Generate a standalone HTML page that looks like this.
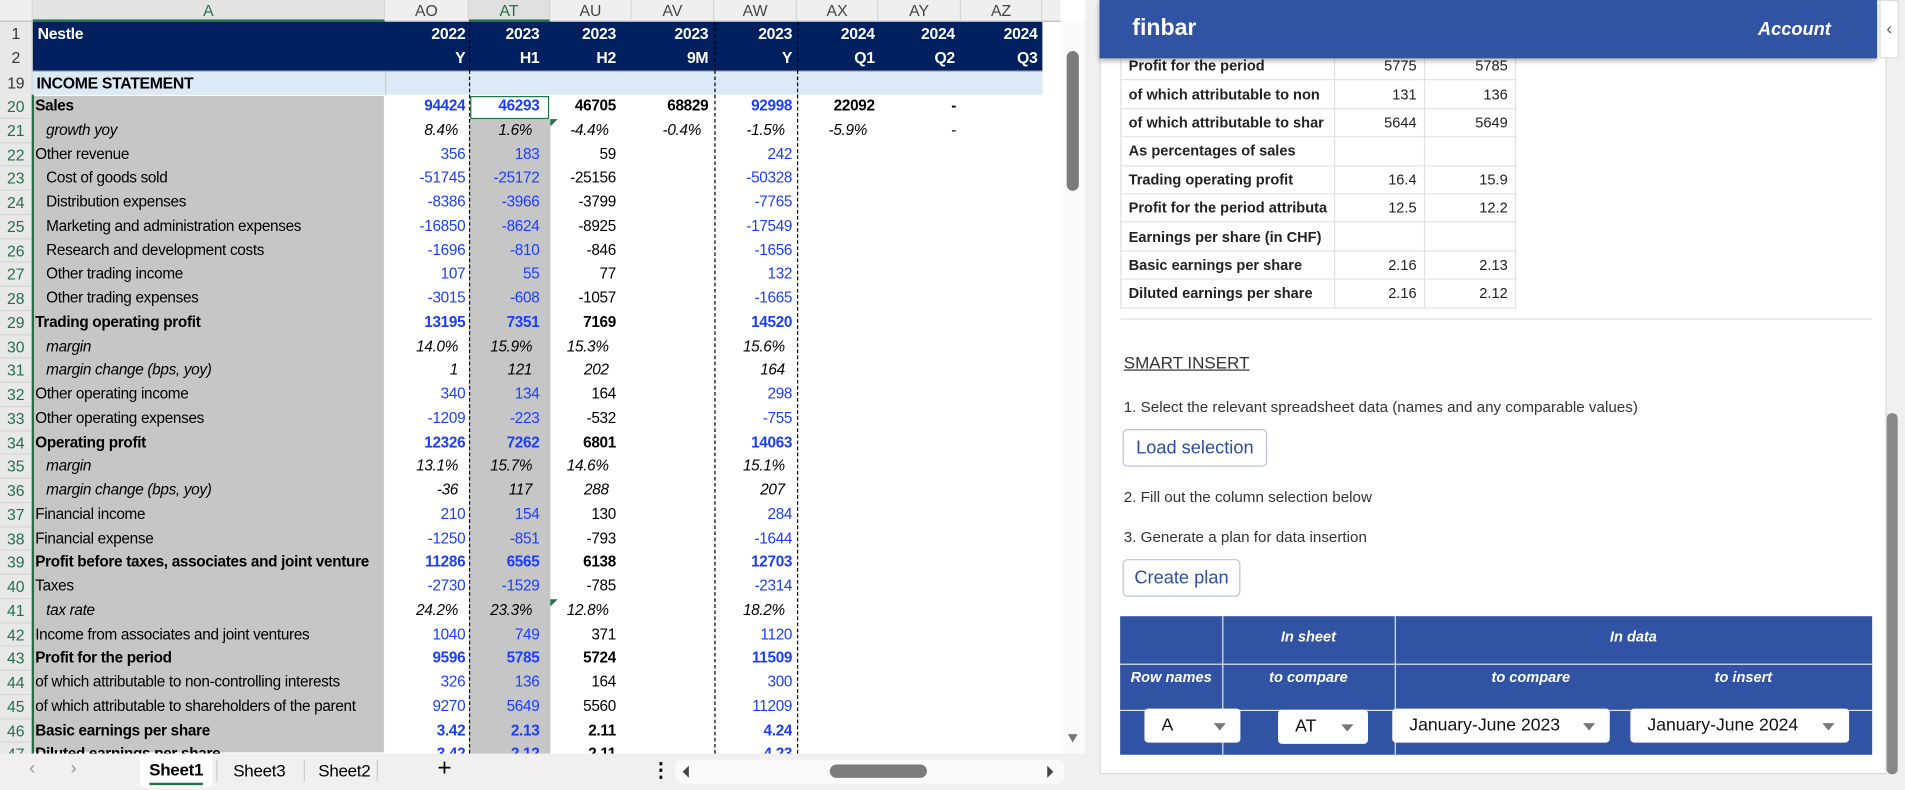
<!DOCTYPE html>
<html><head><meta charset="utf-8">
<style>
*{box-sizing:border-box;margin:0;padding:0}
html,body{width:1905px;height:790px;overflow:hidden;background:#f0f0f0}
#w{position:absolute;left:0;top:0;width:1568px;height:650px;transform:scale(1.2149,1.2154);transform-origin:0 0;background:#f0f0f0;overflow:hidden}
.xl{position:absolute;left:0;top:0;width:893px;height:650px;background:#fff;font-family:"Liberation Sans Narrow","Liberation Sans",sans-serif;font-size:12.6px;letter-spacing:-0.25px;color:#000}
.ab{position:absolute}
.ch{position:absolute;top:0;height:18px;background:#efefef;border-right:1px solid #d4d4d4;border-bottom:1px solid #bdbdbd;text-align:center;line-height:18px;color:#444;font-size:13px;letter-spacing:0}
.navy{position:absolute;left:27px;top:18px;width:831px;height:40px;background:#002060}
.hr{position:absolute;color:#fff;font-weight:bold;font-size:13px;height:20px;line-height:20px;text-align:right}
.rows{position:absolute;left:0;top:78px;width:873px}
.r{position:relative;height:19.75px;line-height:19.75px}
.r span{position:absolute;top:0;white-space:nowrap;overflow:hidden}
.n{left:0;width:26px;text-align:center;color:#217346;font-size:13px;letter-spacing:0;background:#e8e8e8;border-bottom:1px solid #d4d4d4;height:19.75px}
.a{left:29px;width:288px}
.i{font-style:italic}
.b{font-weight:bold}
.in{padding-left:9px}
.c{text-align:right}
.ao{left:317px;width:66px}.at{left:386px;width:58px}.au{left:453px;width:54px}.av{left:520px;width:63px}.aw{left:588px;width:64px}.ax{left:656px;width:64px}
.p{padding-right:6px}
.bl{color:#1a3dff}
.dot{position:absolute;top:18px;width:0;border-left:1px dashed #000;height:602px}
.pan{font-family:"Liberation Sans",sans-serif}
.tb td{border:1px solid #e2e2e2;height:23.4px;font-size:12px;font-weight:bold;color:#222;padding:0 6px;white-space:nowrap;overflow:hidden}
.tb td.v{text-align:right;font-weight:normal;color:#222}
.bt{position:absolute;border:1px solid #b7c3dd;border-radius:4px;color:#2d4fa0;font-size:15px;text-align:center;line-height:29px;background:#fff}
.bt2{position:absolute;color:#fff;font-style:italic;font-weight:bold;font-size:12px;text-align:center}
.sel{position:absolute;background:#fff;border-radius:3px;font-size:14.5px;color:#111;line-height:28px;padding-left:14px;height:28px}
.sel:after{content:"";position:absolute;right:12px;top:12px;border-left:5px solid transparent;border-right:5px solid transparent;border-top:6px solid #777}
</style></head><body><div id="w">
<div class="xl">
 <div class="ab" style="left:0;top:0;width:27px;height:18px;background:#efefef;border-right:1px solid #d4d4d4;border-bottom:1px solid #bdbdbd"></div>
 <div class="ch" style="left:27px;width:290px;color:#217346;border-bottom:2px solid #217346;background:#e3e3e3">A</div>
 <div class="ch" style="left:317px;width:69px">AO</div>
 <div class="ch" style="left:386px;width:67px;color:#217346;border-bottom:2px solid #217346;background:#e0e0e0">AT</div>
 <div class="ch" style="left:453px;width:67px">AU</div>
 <div class="ch" style="left:520px;width:68px">AV</div>
 <div class="ch" style="left:588px;width:68px">AW</div>
 <div class="ch" style="left:656px;width:67px">AX</div>
 <div class="ch" style="left:723px;width:68px">AY</div>
 <div class="ch" style="left:791px;width:67px">AZ</div>
 <div class="ch" style="left:858px;width:15px;border-right:none"></div>
 <div class="ab" style="left:0;top:18px;width:27px;height:60px;background:#e8e8e8;border-right:1px solid #d4d4d4"></div>
 <div class="ab" style="left:0;top:18px;width:26px;text-align:center;line-height:20px;color:#333;font-size:13px">1<br>2</div>
 <div class="ab" style="left:0;top:58.5px;width:26px;text-align:center;line-height:20px;color:#333;font-size:13px">19</div>
 <div class="navy"></div>
 <div class="hr" style="left:31px;top:18px;text-align:left">Nestle</div>
 <div class="hr" style="left:317px;top:18px;width:66px">2022<br>Y</div>
 <div class="hr" style="left:386px;top:18px;width:58px">2023<br>H1</div>
 <div class="hr" style="left:453px;top:18px;width:54px">2023<br>H2</div>
 <div class="hr" style="left:520px;top:18px;width:63px">2023<br>9M</div>
 <div class="hr" style="left:588px;top:18px;width:64px">2023<br>Y</div>
 <div class="hr" style="left:656px;top:18px;width:64px">2024<br>Q1</div>
 <div class="hr" style="left:723px;top:18px;width:63px">2024<br>Q2</div>
 <div class="hr" style="left:791px;top:18px;width:63px">2024<br>Q3</div>
 <div class="ab" style="left:27px;top:58px;width:831px;height:1px;background:#9a9a9a"></div>
 <div class="ab" style="left:27px;top:59px;width:831px;height:19px;background:#dce9f7"></div>
 <div class="ab" style="left:317px;top:59px;width:1px;height:19px;background:#c8c8c8"></div>
 <div class="ab b" style="left:30px;top:59px;line-height:19px;font-size:13px">INCOME STATEMENT</div>
 <div class="ab" style="left:27px;top:78px;width:290px;height:542px;background:#c6c6c6;border:1px solid #fff"></div>
 <div class="ab" style="left:386px;top:98px;width:67px;height:522px;background:#c6c6c6"></div>
 <div class="ab" style="left:387px;top:79px;width:65px;height:19px;border:1.5px solid #217346;background:#fff"></div>
 <div class="ab" style="left:26px;top:78px;width:2px;height:542px;background:#217346"></div>
 <div class="ab" style="left:453px;top:98px;border-top:6px solid #217346;border-right:6px solid transparent"></div>
 <div class="ab" style="left:453px;top:493px;border-top:6px solid #217346;border-right:6px solid transparent"></div>
 <div class="dot" style="left:386px"></div>
 <div class="dot" style="left:588px"></div>
 <div class="dot" style="left:656px"></div>
 <div class="rows">
  <div class="r"><span class="n">20</span><span class="a b">Sales</span><span class="c ao b bl">94424</span><span class="c at b bl">46293</span><span class="c au b">46705</span><span class="c av b">68829</span><span class="c aw b bl">92998</span><span class="c ax b">22092</span><span class="b" style="left:783px">-</span></div>
  <div class="r"><span class="n">21</span><span class="a i in">growth yoy</span><span class="c ao i p">8.4%</span><span class="c at i p">1.6%</span><span class="c au i p">-4.4%</span><span class="c av i p">-0.4%</span><span class="c aw i p">-1.5%</span><span class="i" style="left:682px">-5.9%</span><span style="left:783px">-</span></div>
  <div class="r"><span class="n">22</span><span class="a">Other revenue</span><span class="c ao bl">356</span><span class="c at bl">183</span><span class="c au">59</span><span class="c aw bl">242</span></div>
  <div class="r"><span class="n">23</span><span class="a in">Cost of goods sold</span><span class="c ao bl">-51745</span><span class="c at bl">-25172</span><span class="c au">-25156</span><span class="c aw bl">-50328</span></div>
  <div class="r"><span class="n">24</span><span class="a in">Distribution expenses</span><span class="c ao bl">-8386</span><span class="c at bl">-3966</span><span class="c au">-3799</span><span class="c aw bl">-7765</span></div>
  <div class="r"><span class="n">25</span><span class="a in">Marketing and administration expenses</span><span class="c ao bl">-16850</span><span class="c at bl">-8624</span><span class="c au">-8925</span><span class="c aw bl">-17549</span></div>
  <div class="r"><span class="n">26</span><span class="a in">Research and development costs</span><span class="c ao bl">-1696</span><span class="c at bl">-810</span><span class="c au">-846</span><span class="c aw bl">-1656</span></div>
  <div class="r"><span class="n">27</span><span class="a in">Other trading income</span><span class="c ao bl">107</span><span class="c at bl">55</span><span class="c au">77</span><span class="c aw bl">132</span></div>
  <div class="r"><span class="n">28</span><span class="a in">Other trading expenses</span><span class="c ao bl">-3015</span><span class="c at bl">-608</span><span class="c au">-1057</span><span class="c aw bl">-1665</span></div>
  <div class="r"><span class="n">29</span><span class="a b">Trading operating profit</span><span class="c ao b bl">13195</span><span class="c at b bl">7351</span><span class="c au b">7169</span><span class="c aw b bl">14520</span></div>
  <div class="r"><span class="n">30</span><span class="a i in">margin</span><span class="c ao i p">14.0%</span><span class="c at i p">15.9%</span><span class="c au i p">15.3%</span><span class="c aw i p">15.6%</span></div>
  <div class="r"><span class="n">31</span><span class="a i in">margin change (bps, yoy)</span><span class="c ao i p">1</span><span class="c at i p">121</span><span class="c au i p">202</span><span class="c aw i p">164</span></div>
  <div class="r"><span class="n">32</span><span class="a">Other operating income</span><span class="c ao bl">340</span><span class="c at bl">134</span><span class="c au">164</span><span class="c aw bl">298</span></div>
  <div class="r"><span class="n">33</span><span class="a">Other operating expenses</span><span class="c ao bl">-1209</span><span class="c at bl">-223</span><span class="c au">-532</span><span class="c aw bl">-755</span></div>
  <div class="r"><span class="n">34</span><span class="a b">Operating profit</span><span class="c ao b bl">12326</span><span class="c at b bl">7262</span><span class="c au b">6801</span><span class="c aw b bl">14063</span></div>
  <div class="r"><span class="n">35</span><span class="a i in">margin</span><span class="c ao i p">13.1%</span><span class="c at i p">15.7%</span><span class="c au i p">14.6%</span><span class="c aw i p">15.1%</span></div>
  <div class="r"><span class="n">36</span><span class="a i in">margin change (bps, yoy)</span><span class="c ao i p">-36</span><span class="c at i p">117</span><span class="c au i p">288</span><span class="c aw i p">207</span></div>
  <div class="r"><span class="n">37</span><span class="a">Financial income</span><span class="c ao bl">210</span><span class="c at bl">154</span><span class="c au">130</span><span class="c aw bl">284</span></div>
  <div class="r"><span class="n">38</span><span class="a">Financial expense</span><span class="c ao bl">-1250</span><span class="c at bl">-851</span><span class="c au">-793</span><span class="c aw bl">-1644</span></div>
  <div class="r"><span class="n">39</span><span class="a b">Profit before taxes, associates and joint venture</span><span class="c ao b bl">11286</span><span class="c at b bl">6565</span><span class="c au b">6138</span><span class="c aw b bl">12703</span></div>
  <div class="r"><span class="n">40</span><span class="a">Taxes</span><span class="c ao bl">-2730</span><span class="c at bl">-1529</span><span class="c au">-785</span><span class="c aw bl">-2314</span></div>
  <div class="r"><span class="n">41</span><span class="a i in">tax rate</span><span class="c ao i p">24.2%</span><span class="c at i p">23.3%</span><span class="c au i p">12.8%</span><span class="c aw i p">18.2%</span></div>
  <div class="r"><span class="n">42</span><span class="a">Income from associates and joint ventures</span><span class="c ao bl">1040</span><span class="c at bl">749</span><span class="c au">371</span><span class="c aw bl">1120</span></div>
  <div class="r"><span class="n">43</span><span class="a b">Profit for the period</span><span class="c ao b bl">9596</span><span class="c at b bl">5785</span><span class="c au b">5724</span><span class="c aw b bl">11509</span></div>
  <div class="r"><span class="n">44</span><span class="a">of which attributable to non-controlling interests</span><span class="c ao bl">326</span><span class="c at bl">136</span><span class="c au">164</span><span class="c aw bl">300</span></div>
  <div class="r"><span class="n">45</span><span class="a">of which attributable to shareholders of the parent</span><span class="c ao bl">9270</span><span class="c at bl">5649</span><span class="c au">5560</span><span class="c aw bl">11209</span></div>
  <div class="r"><span class="n">46</span><span class="a b">Basic earnings per share</span><span class="c ao b bl">3.42</span><span class="c at b bl">2.13</span><span class="c au b">2.11</span><span class="c aw b bl">4.24</span></div>
  <div class="r"><span class="n">47</span><span class="a b">Diluted earnings per share</span><span class="c ao b bl">3.42</span><span class="c at b bl">2.12</span><span class="c au b">2.11</span><span class="c aw b bl">4.23</span></div>
 </div>
 <div class="ab" style="left:873px;top:18px;width:20px;height:602px;background:#fafafa"></div>
 <div class="ab" style="left:878px;top:42px;width:10px;height:115px;background:#7b7b7b;border-radius:5px"></div>
 <div class="ab" style="left:879px;top:604px;border-left:4px solid transparent;border-right:4px solid transparent;border-top:7px solid #777"></div>
 <div class="ab" style="left:0;top:620px;width:893px;height:30px;background:#f1efef"></div>
 <div class="ab" style="left:24px;top:624px;color:#999;font-size:15px">&#x2039;</div>
 <div class="ab" style="left:58px;top:624px;color:#999;font-size:15px">&#x203A;</div>
 <div class="ab" style="left:115px;top:620px;width:60px;height:28px;background:#fff;text-align:center;font-size:14px;line-height:26px;font-weight:bold;border-radius:0 0 4px 4px">Sheet1<div style="position:absolute;left:8px;right:8px;bottom:2px;height:2px;background:#217346"></div></div>
 <div class="ab" style="left:178px;top:625px;width:1px;height:18px;background:#ccc"></div>
 <div class="ab" style="left:192px;top:620px;font-size:14px;line-height:28px">Sheet3</div>
 <div class="ab" style="left:250px;top:625px;width:1px;height:18px;background:#ccc"></div>
 <div class="ab" style="left:262px;top:620px;font-size:14px;line-height:28px">Sheet2</div>
 <div class="ab" style="left:310px;top:625px;width:1px;height:18px;background:#ccc"></div>
 <div class="ab" style="left:360px;top:621px;font-size:20px">+</div>
 <div class="ab" style="left:536px;top:620px;font-size:16px;font-weight:bold;line-height:30px">&#x22EE;</div>
 <div class="ab" style="left:556px;top:625px;width:320px;height:20px;background:#fafafa;border-radius:6px"></div>
 <div class="ab" style="left:562px;top:630px;border-top:5px solid transparent;border-bottom:5px solid transparent;border-right:5px solid #444"></div>
 <div class="ab" style="left:683px;top:629px;width:80px;height:11px;background:#7b7b7b;border-radius:6px"></div>
 <div class="ab" style="left:862px;top:630px;border-top:5px solid transparent;border-bottom:5px solid transparent;border-left:5px solid #444"></div>
</div>
<div class="pan">
 <div class="ab" style="left:905px;top:0;width:648px;height:637px;background:#fff;border:1px solid #d8d8d8"></div>
 <div class="ab" style="left:1553px;top:340px;width:9px;height:297px;background:#888;border-radius:4px"></div>
 <table class="tb ab" style="left:922px;top:42px;border-collapse:collapse;table-layout:fixed;width:325px">
  <col style="width:176px"><col style="width:74px"><col style="width:75px">
  <tr><td>Profit for the period</td><td class="v">5775</td><td class="v">5785</td></tr>
  <tr><td>of which attributable to non</td><td class="v">131</td><td class="v">136</td></tr>
  <tr><td>of which attributable to shar</td><td class="v">5644</td><td class="v">5649</td></tr>
  <tr><td>As percentages of sales</td><td></td><td></td></tr>
  <tr><td>Trading operating profit</td><td class="v">16.4</td><td class="v">15.9</td></tr>
  <tr><td>Profit for the period attributa</td><td class="v">12.5</td><td class="v">12.2</td></tr>
  <tr><td>Earnings per share (in CHF)</td><td></td><td></td></tr>
  <tr><td>Basic earnings per share</td><td class="v">2.16</td><td class="v">2.13</td></tr>
  <tr><td>Diluted earnings per share</td><td class="v">2.16</td><td class="v">2.12</td></tr>
 </table>
 <div class="ab" style="left:905px;top:0;width:640px;height:48px;background:#3153a4;box-shadow:0 2px 4px rgba(0,0,0,.3)"></div>
 <div class="ab" style="left:932px;top:13px;color:#fff;font-weight:bold;font-size:19px">finbar</div>
 <div class="ab" style="left:1447px;top:16px;color:#fff;font-weight:bold;font-style:italic;font-size:15px">Account</div>
 <div class="ab" style="left:1547px;top:0;width:16px;height:48px;background:#fff;border:1px solid #ddd;color:#555;font-size:14px;text-align:center;line-height:44px">&#x2039;</div>
 <div class="ab" style="left:922px;top:262px;width:619px;height:1px;background:#ddd"></div>
 <div class="ab" style="left:925px;top:290px;font-size:14px;color:#333;text-decoration:underline">SMART INSERT</div>
 <div class="ab" style="left:925px;top:328px;font-size:12.5px;color:#333">1. Select the relevant spreadsheet data (names and any comparable values)</div>
 <div class="bt" style="left:924px;top:353px;width:119px;height:31px">Load selection</div>
 <div class="ab" style="left:925px;top:402px;font-size:12.5px;color:#333">2. Fill out the column selection below</div>
 <div class="ab" style="left:925px;top:435px;font-size:12.5px;color:#333">3. Generate a plan for data insertion</div>
 <div class="bt" style="left:924px;top:460px;width:97px;height:31px">Create plan</div>
 <div class="ab" style="left:922px;top:507px;width:619px;height:114px;background:#3153a4"></div>
 <div class="ab" style="left:922px;top:546px;width:619px;height:1px;background:#dfe5f2"></div>
 <div class="ab" style="left:922px;top:584px;width:619px;height:1px;background:#dfe5f2"></div>
 <div class="ab" style="left:1006px;top:507px;width:1px;height:114px;background:#dfe5f2"></div>
 <div class="ab" style="left:1148px;top:507px;width:1px;height:114px;background:#dfe5f2"></div>
 <div class="bt2" style="left:1006px;top:517px;width:142px">In sheet</div>
 <div class="bt2" style="left:1148px;top:517px;width:393px">In data</div>
 <div class="bt2" style="left:922px;top:550px;width:84px">Row names</div>
 <div class="bt2" style="left:1006px;top:550px;width:142px">to compare</div>
 <div class="bt2" style="left:1160px;top:550px;width:200px">to compare</div>
 <div class="bt2" style="left:1340px;top:550px;width:190px">to insert</div>
 <div class="sel" style="left:942px;top:583px;width:79px">A</div>
 <div class="sel" style="left:1052px;top:584px;width:74px">AT</div>
 <div class="sel" style="left:1146px;top:583px;width:179px">January-June 2023</div>
 <div class="sel" style="left:1342px;top:583px;width:180px">January-June 2024</div>
</div>
</div></body></html>
